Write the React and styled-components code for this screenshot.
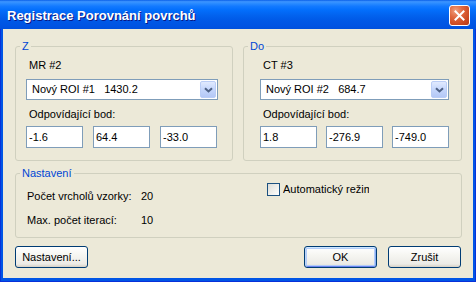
import React from "react";
import styled, { createGlobalStyle } from "styled-components";

const Global = createGlobalStyle`
  html, body { margin: 0; padding: 0; background: #ffffff; }
  body { font-family: "Liberation Sans", Arial, sans-serif; font-size: 11px; color: #000; }
  * { box-sizing: border-box; }
`;

const Window = styled.div`
  width: 476px;
  height: 282px;
  display: flex;
  flex-direction: column;
  background: #0055e5;
  box-shadow: inset 1px 0 0 #0831d9, inset -1px 0 0 #0831d9, inset 0 -1px 0 #0831d9;
  overflow: hidden;
`;

const TitleBar = styled.div`
  height: 29px;
  flex: none;
  display: flex;
  align-items: center;
  justify-content: space-between;
  padding: 0 6px 0 7px;
  background: linear-gradient(
    to bottom,
    #0a5fe8 0%,
    #3d95ff 6%,
    #2a8bff 12%,
    #1279ff 22%,
    #036ffc 34%,
    #0263ef 52%,
    #0058e6 72%,
    #0054e3 88%,
    #0050dd 100%
  );
`;

const Title = styled.span`
  font-family: "Liberation Sans", Arial, sans-serif;
  font-weight: bold;
  font-size: 13px;
  color: #ffffff;
  text-shadow: 1px 1px 0 #0a1883;
  letter-spacing: 0;
  margin-top: 1px;
`;

const CloseButton = styled.div`
  width: 21px;
  height: 21px;
  border: 1px solid #ffffff;
  border-radius: 3px;
  background: radial-gradient(circle at 30% 25%, #f0a080 0%, #e0683f 35%, #cc4a22 70%, #b83a16 100%);
  display: flex;
  align-items: center;
  justify-content: center;
  margin-top: 1px;
`;

const Client = styled.div`
  flex: 1;
  margin: 0 3px 4px 3px;
  background: #ece9d8;
  padding: 10px 11px 10px 12px;
  display: flex;
  flex-direction: column;
`;

const TopRow = styled.div`
  display: flex;
  gap: 10px;
  height: 122px;
`;

const Group = styled.fieldset`
  margin: 0;
  padding: 0;
  min-width: 0;
  border: 1px solid #d0d0bf;
  border-radius: 3px;
  width: ${(p) => (p.$width ? `${p.$width}px` : "auto")};
  flex: ${(p) => (p.$width ? "none" : "1")};
`;

const Legend = styled.legend`
  margin-left: 4px;
  padding: 0 2px;
  font-size: 11px;
  line-height: 14px;
  color: #0046d5;
`;

const GroupBody = styled.div`
  display: flex;
  flex-direction: column;
  padding: 0 ${(p) => p.$right}px 0 ${(p) => p.$left}px;
`;

const Label = styled.div`
  line-height: 13px;
  margin-top: ${(p) => p.$top}px;
  padding-left: ${(p) => p.$indent || 0}px;
  white-space: nowrap;
`;

const Combo = styled.div`
  margin-top: 7px;
  height: 21px;
  border: 1px solid #7f9db9;
  background: #ffffff;
  display: flex;
  align-items: center;
  justify-content: space-between;
  padding: 1px 1px 1px 5px;
`;

const ComboText = styled.span`
  white-space: pre;
  line-height: 13px;
`;

const DropButton = styled.div`
  width: 16px;
  height: 17px;
  border: 1px solid #bacdf6;
  border-radius: 2px;
  background: linear-gradient(to bottom, #e1eafe 0%, #c7d8fc 45%, #b4c8f6 100%);
  display: flex;
  align-items: center;
  justify-content: center;
`;

const Fields = styled.div`
  margin-top: 5px;
  display: grid;
  grid-template-columns: repeat(3, 57px);
  justify-content: space-between;
  width: ${(p) => p.$width}px;
`;

const Field = styled.div`
  height: 22px;
  border: 1px solid #7f9db9;
  background: #ffffff;
  padding: 0 2px;
  display: flex;
  align-items: center;
  line-height: 13px;
  white-space: nowrap;
`;

const SettingsGroup = styled(Group)`
  margin-top: 5px;
  height: 72px;
`;

const SettingsBody = styled.div`
  display: flex;
  padding-left: 11px;
`;

const Params = styled.div`
  width: 240px;
  flex: none;
  display: grid;
  grid-template-columns: 114px auto;
  row-gap: 11px;
  padding-top: 10px;
  align-content: start;
`;

const ParamText = styled.div`
  line-height: 13px;
  white-space: nowrap;
`;

const CheckRow = styled.label`
  margin-top: 3px;
  display: flex;
  align-items: center;
  gap: 3px;
  height: 13px;
`;

const CheckBox = styled.span`
  width: 13px;
  height: 13px;
  flex: none;
  border: 1px solid #1c5180;
  background: linear-gradient(135deg, #dcdcd7 0%, #f2f2ee 60%, #ffffff 100%);
`;

const CheckText = styled.span`
  width: 86px;
  overflow: hidden;
  white-space: nowrap;
  line-height: 13px;
`;

const ButtonRow = styled.div`
  margin-top: 8px;
  display: flex;
  align-items: center;
  padding-right: 1px;
`;

const Button = styled.div`
  width: 73px;
  height: 22px;
  border: 1px solid #003c74;
  border-radius: 3px;
  background: linear-gradient(to bottom, #ffffff 0%, #f6f6f2 40%, #ecebe6 85%, #d6d0c5 100%);
  display: flex;
  align-items: center;
  justify-content: center;
  line-height: 13px;
  margin-left: ${(p) => p.$gap || 0}px;
  box-shadow: ${(p) =>
    p.$default
      ? "inset 0 1px 0 #cee7ff, inset 1px 0 0 #bcd4f6, inset -1px 0 0 #89adf4, inset 0 -1px 0 #6982ee, inset 0 0 0 2px #b3cdf9"
      : "none"};
`;

const Spacer = styled.div`
  flex: 1;
`;

const Chevron = () => (
  <svg width="9" height="6" viewBox="0 0 9 6">
    <path d="M1 1.2 L4.5 4.5 L8 1.2" fill="none" stroke="#4d6185" strokeWidth="2" />
  </svg>
);

const CloseX = () => (
  <svg width="11" height="11" viewBox="0 0 11 11">
    <path d="M1.5 1.5 L9.5 9.5 M9.5 1.5 L1.5 9.5" stroke="#ffffff" strokeWidth="2" strokeLinecap="square" />
  </svg>
);

const SourceGroup = ({ title, width, left, right, modality, roi, values, fieldsWidth }) => (
  <Group $width={width}>
    <Legend>{title}</Legend>
    <GroupBody $left={left} $right={right}>
      <Label $top={6} $indent={3}>{modality}</Label>
      <Combo>
        <ComboText>{roi}</ComboText>
        <DropButton>
          <Chevron />
        </DropButton>
      </Combo>
      <Label $top={8} $indent={3}>Odpovídající bod:</Label>
      <Fields $width={fieldsWidth}>
        {values.map((v) => (
          <Field key={v}>{v}</Field>
        ))}
      </Fields>
    </GroupBody>
  </Group>
);

export default function App() {
  return (
    <>
      <Global />
      <Window>
        <TitleBar>
          <Title>Registrace Porovnání povrchů</Title>
          <CloseButton>
            <CloseX />
          </CloseButton>
        </TitleBar>
        <Client>
          <TopRow>
            <SourceGroup
              title="Z"
              width={218}
              left={10}
              right={14}
              modality="MR #2"
              roi={"Nový ROI #1   1430.2"}
              values={["-1.6", "64.4", "-33.0"]}
              fieldsWidth={191}
            />
            <SourceGroup
              title="Do"
              left={16}
              right={12}
              modality="CT #3"
              roi={"Nový ROI #2   684.7"}
              values={["1.8", "-276.9", "-749.0"]}
              fieldsWidth={189}
            />
          </TopRow>
          <SettingsGroup>
            <Legend>Nastavení</Legend>
            <SettingsBody>
              <Params>
                <ParamText>Počet vrcholů vzorky:</ParamText>
                <ParamText>20</ParamText>
                <ParamText>Max. počet iterací:</ParamText>
                <ParamText>10</ParamText>
              </Params>
              <CheckRow>
                <CheckBox />
                <CheckText>Automatický režim</CheckText>
              </CheckRow>
            </SettingsBody>
          </SettingsGroup>
          <ButtonRow>
            <Button>Nastavení...</Button>
            <Spacer />
            <Button $default>OK</Button>
            <Button $gap={11}>Zrušit</Button>
          </ButtonRow>
        </Client>
      </Window>
    </>
  );
}
